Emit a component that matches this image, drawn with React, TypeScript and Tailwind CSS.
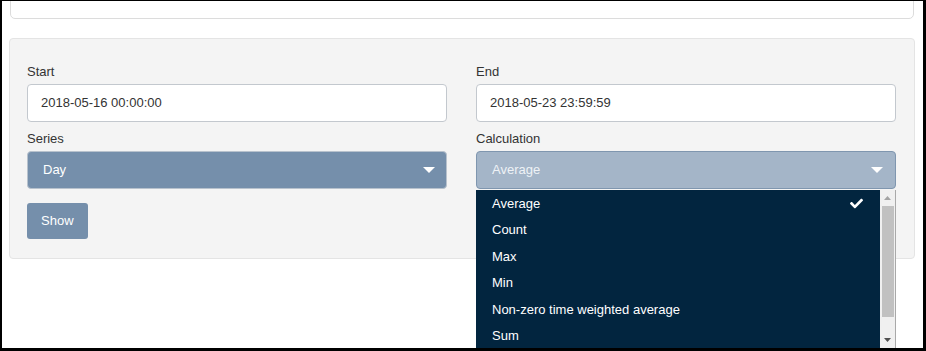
import { FaCheck } from "react-icons/fa";

const options = ["Average", "Count", "Max", "Min", "Non-zero time weighted average", "Sum"];

function Caret() {
  return (
    <svg width="12" height="6" viewBox="0 0 12 6" className="shrink-0">
      <path d="M0 0 L12 0 L6 6 Z" fill="white" />
    </svg>
  );
}

export default function App() {
  return (
    <div
      className="w-[926px] h-[351px] overflow-hidden bg-white border-t border-l-2 border-r-[3px] border-b-[3px] border-black text-[13px] text-[#333]"
      style={{ fontFamily: '"Liberation Sans", Arial, sans-serif' }}
    >
      {/* top card, cut off by the frame */}
      <div className="-mt-[11px] ml-[8px] mr-[9px] h-[29px] rounded-[5px] border border-[#dcdcdc] bg-white" />

      {/* filter panel */}
      <div className="mt-[19px] ml-[7px] mr-[8px] rounded-[4px] border border-[#e4e4e4] bg-[#f4f4f4] pt-[25px] pl-[17px] pr-[18px] pb-[19px]">
        <div className="grid grid-cols-2 gap-x-[29px]">
          <div>
            <div className="leading-[15px] mb-[5px]">Start</div>
            <div className="h-[38px] rounded-[4px] border border-[#c3c8ce] bg-white pl-[13px] flex items-center">
              2018-05-16 00:00:00
            </div>
          </div>
          <div>
            <div className="leading-[15px] mb-[5px]">End</div>
            <div className="h-[38px] rounded-[4px] border border-[#c3c8ce] bg-white pl-[13px] flex items-center">
              2018-05-23 23:59:59
            </div>
          </div>

          <div className="mt-[9px]">
            <div className="leading-[15px] mb-[5px]">Series</div>
            <div className="h-[38px] rounded-[4px] border border-[#b8c2cd] bg-[#758fab] pl-[15px] pr-[11px] flex items-center justify-between text-white">
              <span>Day</span>
              <Caret />
            </div>
          </div>
          <div className="mt-[9px]">
            <div className="leading-[15px] mb-[5px]">Calculation</div>
            <div className="relative">
              <div className="h-[38px] rounded-[4px] border border-[#7f96af] bg-[#a4b5c8] pl-[15px] pr-[12px] flex items-center justify-between text-[#eef2f6]">
                <span>Average</span>
                <Caret />
              </div>
              {/* open dropdown */}
              <div className="absolute left-0 top-[39px] w-[420px] h-[158px] flex z-10">
                <ul className="flex-1 bg-[#02253f] text-white">
                  {options.map((o, i) => (
                    <li key={o} className="h-[26.5px] pl-[16px] pr-[17px] flex items-center justify-between">
                      <span>{o}</span>
                      {i === 0 && <FaCheck size={13} color="white" />}
                    </li>
                  ))}
                </ul>
                <div className="w-[16px] bg-[#f0f0f0] border-r border-[#a9a9a9] flex flex-col items-center">
                  <div className="h-[16px] flex items-center justify-center">
                    <svg width="7" height="4" viewBox="0 0 7 4">
                      <path d="M0 4 L7 4 L3.5 0 Z" fill="#a3a3a3" />
                    </svg>
                  </div>
                  <div className="w-[12px] h-[111px] bg-[#c1c1c1]" />
                  <div className="flex-1" />
                  <div className="h-[16px] flex items-center justify-center">
                    <svg width="7" height="4" viewBox="0 0 7 4">
                      <path d="M0 0 L7 0 L3.5 4 Z" fill="#505050" />
                    </svg>
                  </div>
                </div>
              </div>
            </div>
          </div>
        </div>

        <button className="mt-[14px] h-[36px] rounded-[3px] bg-[#758fab] px-[14px] text-white">
          Show
        </button>
      </div>
    </div>
  );
}
